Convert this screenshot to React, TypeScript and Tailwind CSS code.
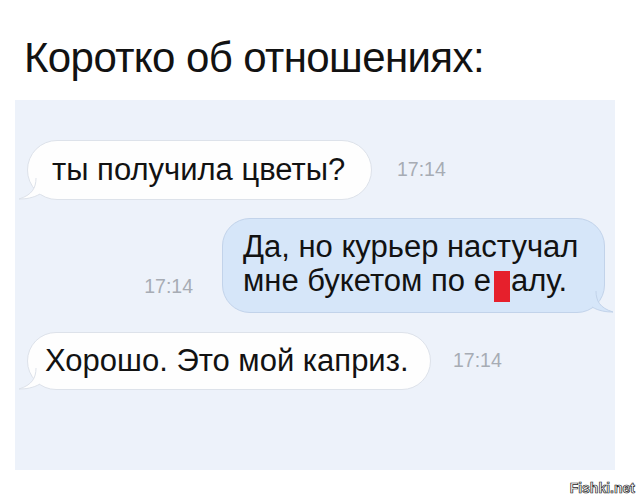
import React from "react";

function TailLeft({ fill, stroke }: { fill: string; stroke: string }) {
  return (
    <svg
      className="absolute left-[-10px] bottom-[-1px]"
      width="26"
      height="22"
      viewBox="0 0 26 22"
    >
      <path
        d="M18 0 C18 10 14 17 1 21 C8 21 15 20 22 16 L26 16 L26 0 Z"
        fill={fill}
      />
      <path d="M18 0 C18 10 14 17 1 21 C8 21 15 20 22 16" fill="none" stroke={stroke} strokeWidth="1" />
    </svg>
  );
}

function TailRight({ fill, stroke }: { fill: string; stroke: string }) {
  return (
    <svg
      className="absolute right-[-10px] bottom-[-1px]"
      width="26"
      height="22"
      viewBox="0 0 26 22"
    >
      <path
        d="M8 0 C8 10 12 17 25 21 C18 21 11 20 4 16 L0 16 L0 0 Z"
        fill={fill}
      />
      <path d="M8 0 C8 10 12 17 25 21 C18 21 11 20 4 16" fill="none" stroke={stroke} strokeWidth="1" />
    </svg>
  );
}

function Time({ children }: { children: React.ReactNode }) {
  return <span className="text-[19.5px] leading-none text-[#a7acb4]">{children}</span>;
}

export default function App() {
  return (
    <div className="relative w-[640px] h-[500px] bg-white font-['Liberation_Sans',Arial,sans-serif] text-[#121212] overflow-hidden">
      <h1 className="pt-[37px] pl-[24px] text-[42px] leading-none tracking-[-0.6px]">Коротко об отношениях:</h1>

      <div className="mt-[21px] ml-[15px] w-[600px] h-[370px] bg-[#edf2fa] flex flex-col pt-[40px]">
        {/* incoming */}
        <div className="flex items-center gap-[25px] pl-[12px]">
          <div className="relative h-[60px] w-[345px] rounded-[30px] bg-[#fefefe] border border-[#dde2ea] flex items-center pl-[24px] text-[31px]">
            <TailLeft fill="#fefefe" stroke="#dde2ea" />
            <span className="relative">ты получила цветы?</span>
          </div>
          <Time>17:14</Time>
        </div>

        {/* outgoing */}
        <div className="flex items-end justify-end gap-[29px] pr-[10px] mt-[18px]">
          <span className="mb-[13px]">
            <Time>17:14</Time>
          </span>
          <div className="relative h-[95px] w-[383px] rounded-[28px] bg-[#d6e6f9] border border-[#c2d3ea] flex flex-col justify-center pl-[20px] text-[31px] leading-[34px]">
            <TailRight fill="#d6e6f9" stroke="#c2d3ea" />
            <span className="relative">Да, но курьер настучал</span>
            <span className="relative">
              мне букетом по е<span className="inline-block w-[16px] h-[31px] bg-[#e6202c] align-[-11px] ml-[3px] mr-[1px]" />алу.
            </span>
          </div>
        </div>

        {/* incoming */}
        <div className="flex items-center gap-[22px] pl-[12px] mt-[19px]">
          <div className="relative h-[58px] w-[404px] rounded-[29px] bg-[#fefefe] border border-[#dde2ea] flex items-center pl-[17px] text-[31px]">
            <TailLeft fill="#fefefe" stroke="#dde2ea" />
            <span className="relative">Хорошо. Это мой каприз.</span>
          </div>
          <Time>17:14</Time>
        </div>
      </div>

      <span className="absolute right-[5px] bottom-[5px] text-[14px] leading-none font-bold text-white [-webkit-text-stroke:0.7px_#222]">
        Fishki.net
      </span>
    </div>
  );
}
